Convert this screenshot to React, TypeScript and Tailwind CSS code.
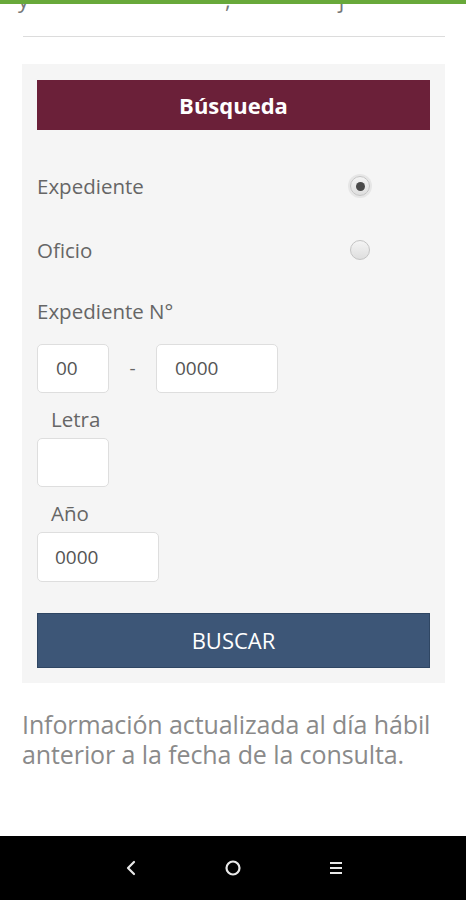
import React from "react";

function Radio({ checked }: { checked?: boolean }) {
  return (
    <div className={"w-[20px] h-[20px] rounded-full flex items-center justify-center border border-[#c4c4c4] bg-gradient-to-b from-[#f4f4f4] to-[#dedede] " + (checked ? "shadow-[0_0_0_2px_#e6e6e6]" : "")}>
      {checked ? <div className="w-[9px] h-[9px] rounded-full bg-[#4a4a4a]" /> : null}
    </div>
  );
}

export default function App() {
  const font = { fontFamily: '"Open Sans", "Noto Sans", sans-serif' };
  return (
    <div className="w-[466px] h-[900px] bg-white flex flex-col overflow-hidden" style={font}>
      <div className="h-[4px] bg-[#68a93a] shrink-0" />
      <div className="h-[32px] overflow-hidden shrink-0">
        <div className="flex -mt-[20px] text-[22px] leading-[30px] text-[#777]">
          <span className="ml-[18px]">y</span>
          <span className="ml-[196px]">,</span>
          <span className="ml-[108px]">j</span>
        </div>
      </div>
      <div className="h-[1px] bg-[#dcdcdc] ml-[23px] mr-[21px] shrink-0" />
      <div className="ml-[22px] mr-[21px] mt-[27px] bg-[#f5f5f5] pt-[16px] pb-[15px] px-[15px] flex flex-col">
        <div className="h-[50px] bg-[#6b2039] flex items-center justify-center text-white text-[22px] font-bold">
          Búsqueda
        </div>
        <div className="mt-[42px] h-[28px] flex items-center">
          <span className="flex-1 text-[20.5px] text-[#666]">Expediente</span>
          <div className="mr-[60px]"><Radio checked /></div>
        </div>
        <div className="mt-[36px] h-[28px] flex items-center">
          <span className="flex-1 text-[20.5px] text-[#666]">Oficio</span>
          <div className="mr-[60px]"><Radio /></div>
        </div>
        <div className="mt-[33px] h-[28px] flex items-center text-[20.5px] text-[#666]">Expediente N°</div>
        <div className="mt-[19px] flex items-center">
          <div className="w-[72px] h-[49px] bg-white border border-[#dedede] rounded-[5px] flex items-center pl-[18px] text-[19px] text-[#555]">00</div>
          <div className="w-[47px] text-center text-[19px] text-[#666]">-</div>
          <div className="w-[122px] h-[49px] bg-white border border-[#dedede] rounded-[5px] flex items-center pl-[18px] text-[19px] text-[#555]">0000</div>
        </div>
        <div className="mt-[14px] h-[24px] flex items-center pl-[14px] text-[20.5px] text-[#666]">Letra</div>
        <div className="mt-[7px] w-[72px] h-[49px] bg-white border border-[#dedede] rounded-[5px]" />
        <div className="mt-[14px] h-[24px] flex items-center pl-[14px] text-[20.5px] text-[#666]">Año</div>
        <div className="mt-[7px] w-[122px] h-[50px] bg-white border border-[#dedede] rounded-[5px] flex items-center pl-[17px] text-[19px] text-[#555]">0000</div>
        <div className="mt-[31px] h-[55px] bg-[#3d5677] border border-[#2f4663] flex items-center justify-center text-white text-[22px]">
          BUSCAR
        </div>
      </div>
      <div className="mx-[22px] mt-[26px] text-[25px] leading-[30px] tracking-[-0.1px] text-[#8a8a8a]">
        Información actualizada al día hábil anterior a la fecha de la consulta.
      </div>
      <div className="mt-auto h-[64px] bg-black shrink-0 flex items-center">
        <div className="w-[262px] h-[64px] ml-[102px] flex items-center justify-between">
          <svg width="56" height="24" viewBox="0 0 56 24">
            <path d="M32 6 L26 12 L32 18" stroke="#e8e8e8" strokeWidth="2.2" fill="none" strokeLinecap="round" strokeLinejoin="round" />
          </svg>
          <svg width="24" height="24" viewBox="0 0 24 24">
            <circle cx="12" cy="12" r="6.5" stroke="#e8e8e8" strokeWidth="2.2" fill="none" />
          </svg>
          <svg width="56" height="24" viewBox="0 0 56 24">
            <path d="M22 7 H34 M22 12 H34 M22 17 H34" stroke="#e8e8e8" strokeWidth="2" fill="none" />
          </svg>
        </div>
      </div>
    </div>
  );
}
